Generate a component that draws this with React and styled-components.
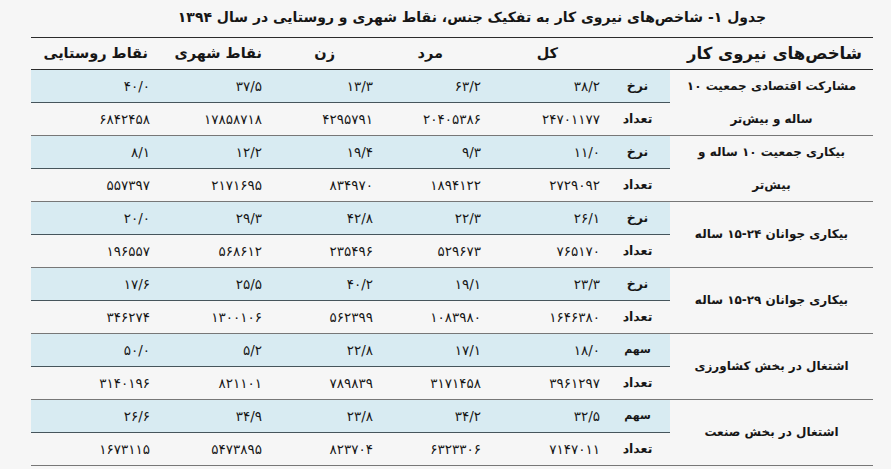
import React from 'react'
import styled, { createGlobalStyle } from 'styled-components'

const GlobalStyle = createGlobalStyle`
  html, body {
    margin: 0;
    padding: 0;
    background: #f6f6f6;
  }
  body {
    font-family: "DejaVu Sans", "Noto Sans", sans-serif;
    color: #161616;
  }
`

const COLS = '203px 65px 119px 108px 111px 112px 124px'

const groups = [
  {
    label: ['مشارکت اقتصادی جمعیت ۱۰', 'ساله و بیش‌تر'],
    kind: 'نرخ',
    rate: ['۳۸/۲', '۶۳/۲', '۱۳/۳', '۳۷/۵', '۴۰/۰'],
    count: ['۲۴۷۰۱۱۷۷', '۲۰۴۰۵۳۸۶', '۴۲۹۵۷۹۱', '۱۷۸۵۸۷۱۸', '۶۸۴۲۴۵۸']
  },
  {
    label: ['بیکاری جمعیت ۱۰ ساله و', 'بیش‌تر'],
    kind: 'نرخ',
    rate: ['۱۱/۰', '۹/۳', '۱۹/۴', '۱۲/۲', '۸/۱'],
    count: ['۲۷۲۹۰۹۲', '۱۸۹۴۱۲۲', '۸۳۴۹۷۰', '۲۱۷۱۶۹۵', '۵۵۷۳۹۷']
  },
  {
    label: ['بیکاری جوانان ۲۴-۱۵ ساله'],
    kind: 'نرخ',
    rate: ['۲۶/۱', '۲۲/۳', '۴۲/۸', '۲۹/۳', '۲۰/۰'],
    count: ['۷۶۵۱۷۰', '۵۲۹۶۷۳', '۲۳۵۴۹۶', '۵۶۸۶۱۲', '۱۹۶۵۵۷']
  },
  {
    label: ['بیکاری جوانان ۲۹-۱۵ ساله'],
    kind: 'نرخ',
    rate: ['۲۳/۳', '۱۹/۱', '۴۰/۲', '۲۵/۵', '۱۷/۶'],
    count: ['۱۶۴۶۳۸۰', '۱۰۸۳۹۸۰', '۵۶۲۳۹۹', '۱۳۰۰۱۰۶', '۳۴۶۲۷۴']
  },
  {
    label: ['اشتغال در بخش کشاورزی'],
    kind: 'سهم',
    rate: ['۱۸/۰', '۱۷/۱', '۲۲/۸', '۵/۲', '۵۰/۰'],
    count: ['۳۹۶۱۲۹۷', '۳۱۷۱۴۵۸', '۷۸۹۸۳۹', '۸۲۱۱۰۱', '۳۱۴۰۱۹۶']
  },
  {
    label: ['اشتغال در بخش صنعت'],
    kind: 'سهم',
    rate: ['۳۲/۵', '۳۴/۲', '۲۳/۸', '۳۴/۹', '۲۶/۶'],
    count: ['۷۱۴۷۰۱۱', '۶۳۲۳۳۰۶', '۸۲۳۷۰۴', '۵۴۷۳۸۹۵', '۱۶۷۳۱۱۵']
  }
]

// header titles with their offset from the column's right edge
const headers = [
  { text: 'کل', inset: 47 },
  { text: 'مرد', inset: 43 },
  { text: 'زن', inset: 43 },
  { text: 'نقاط شهری', inset: 5 },
  { text: 'نقاط روستایی', inset: 7 }
]

const Page = styled.div`
  direction: rtl;
  width: 842px;
  margin-left: 31px;
`

const Title = styled.h1`
  margin: 0;
  height: 37px;
  line-height: 35px;
  border-bottom: 1.5px solid #2b2b2b;
  text-align: center;
  padding-left: 40px;
  font-size: 14px;
  font-weight: bold;
`

const HeaderRow = styled.div`
  display: grid;
  grid-template-columns: ${COLS};
  height: 31px;
  border-bottom: 1.5px solid #2b2b2b;
`

const HeadCell = styled.div`
  font-size: 14.5px;
  font-weight: bold;
  line-height: 31px;
  padding-right: ${props => props.inset || 0}px;
  text-align: right;
  white-space: nowrap;
`

const HeadLabel = styled(HeadCell)`
  grid-column: span 2;
  padding-right: 11px;
  font-size: 16.5px;
`

const Group = styled.div`
  display: grid;
  grid-template-columns: ${COLS};
  grid-template-rows: 33px 32px;
  border-bottom: 1.3px solid #777;
`

const Label = styled.div`
  grid-row: span 2;
  display: flex;
  flex-direction: column;
  justify-content: center;
  align-items: center;
  font-size: 12px;
  font-weight: bold;
  line-height: 33px;
  white-space: nowrap;
`

const Cell = styled.div`
  box-sizing: border-box;
  text-align: ${props => (props.center ? 'center' : 'right')};
  padding-right: ${props => (props.center ? 0 : 5)}px;
  line-height: 32px;
  background: ${props => (props.shaded ? '#d8ebf2' : 'transparent')};
  border-bottom: ${props => (props.shaded ? '1px solid #46555c' : 'none')};
  font-size: ${props => (props.small ? 11 : props.bold ? 12.5 : 13.5)}px;
  font-weight: ${props => (props.bold ? 'bold' : 'normal')};
  white-space: nowrap;
`

export default function App () {
  return (
    <>
      <GlobalStyle />
      <Page>
        <Title>جدول ۱- شاخص‌های نیروی کار به تفکیک جنس، نقاط شهری و روستایی در سال ۱۳۹۴</Title>
        <HeaderRow>
          <HeadLabel>شاخص‌های نیروی کار</HeadLabel>
          {headers.map(h => (
            <HeadCell key={h.text} inset={h.inset}>{h.text}</HeadCell>
          ))}
        </HeaderRow>
        {groups.map(g => (
          <Group key={g.label.join(' ')}>
            <Label>
              {g.label.map(line => <span key={line}>{line}</span>)}
            </Label>
            <Cell center shaded bold small={g.kind === 'سهم'}>{g.kind}</Cell>
            {g.rate.map((v, i) => <Cell key={'r' + i} shaded>{v}</Cell>)}
            <Cell center bold>تعداد</Cell>
            {g.count.map((v, i) => <Cell key={'c' + i}>{v}</Cell>)}
          </Group>
        ))}
      </Page>
    </>
  )
}
